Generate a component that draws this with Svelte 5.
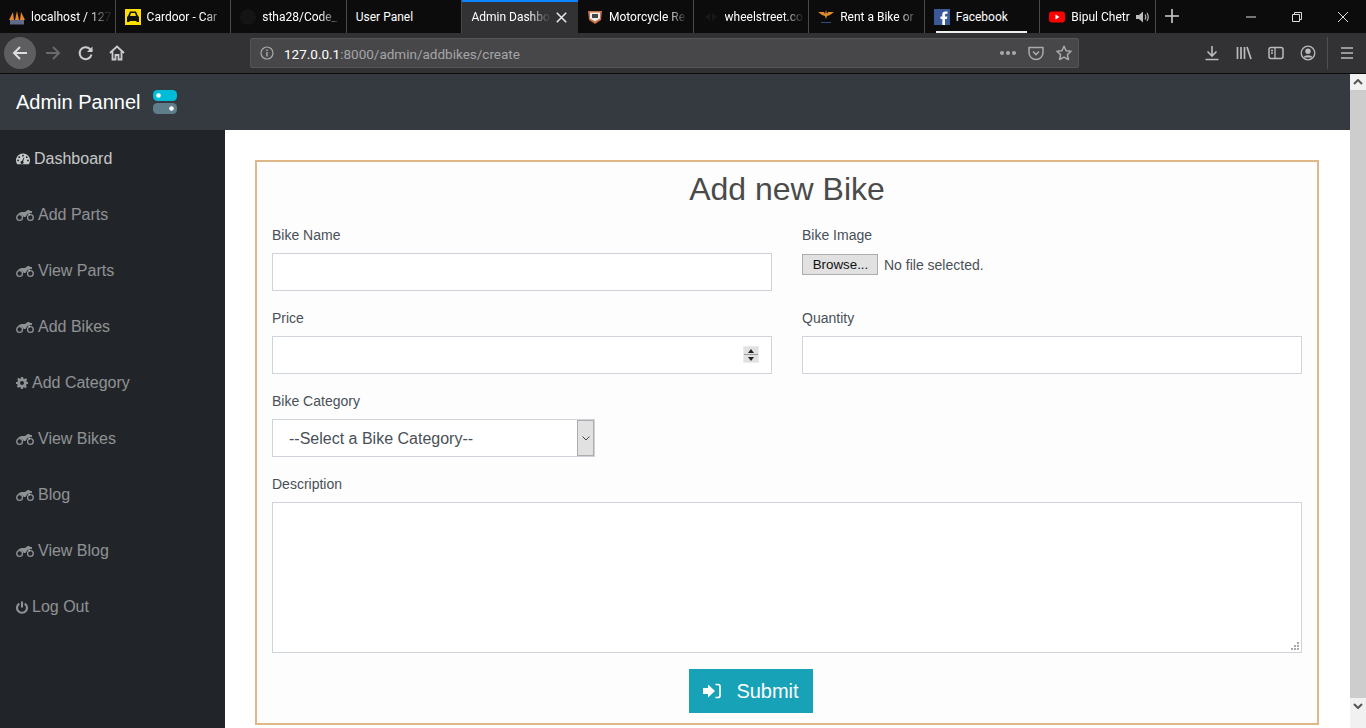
<script>
  const tabs = [
    { title: 'localhost / 127', icon: 'pma' },
    { title: 'Cardoor - Car', icon: 'car' },
    { title: 'stha28/Code_', icon: 'gh' },
    { title: 'User Panel', icon: '', plain: true },
    { title: 'Admin Dashbo', icon: '', active: true },
    { title: 'Motorcycle Re', icon: 'er' },
    { title: 'wheelstreet.co', icon: 'ws' },
    { title: 'Rent a Bike or', icon: 'om' },
    { title: 'Facebook', icon: 'fb', loaded: true, plain: true },
    { title: 'Bipul Chetr', icon: 'yt', audio: true }
  ];

  const menu = [
    { label: 'Dashboard', icon: 'gauge', first: true },
    { label: 'Add Parts', icon: 'bike' },
    { label: 'View Parts', icon: 'bike' },
    { label: 'Add Bikes', icon: 'bike' },
    { label: 'Add Category', icon: 'cog' },
    { label: 'View Bikes', icon: 'bike' },
    { label: 'Blog', icon: 'bike' },
    { label: 'View Blog', icon: 'bike' },
    { label: 'Log Out', icon: 'power' }
  ];
</script>

<div class="browser">
  <div class="tabbar">
    {#each tabs as tab}
      <div class="tab" class:active={tab.active}>
        {#if tab.icon === 'pma'}
          <svg class="fav" viewBox="0 0 16 16"><path d="M0 11 4 3l1 8zM6 11l2-9 2 9zM11 11l1-8 4 8z" fill="#e8862a"/><path d="M1 11h14v4.500H1z" fill="#5f6b88"/></svg>
        {:else if tab.icon === 'car'}
          <svg class="fav" viewBox="0 0 16 16"><path d="M0 0h16v16H0z" fill="#ffdd00"/><path d="M5 2.500h6l2 4.500 1 1v5h-2.500v-1h-7v1H2V8l1-1z" fill="#111"/><path d="M6 4h4l1 3H5z" fill="#ffdd00"/></svg>
        {:else if tab.icon === 'gh'}
          <svg class="fav" viewBox="0 0 16 16"><circle cx="8" cy="8" r="8" fill="#141414"/></svg>
        {:else if tab.icon === 'er'}
          <svg class="fav" viewBox="0 0 16 16"><path d="M1 2h14l-1 9-6 4-6-4z" fill="#c96f45"/><path d="M3 3.500h10v6l-5 3-5-3z" fill="#eee"/><path d="M5 5h6v4H5z" fill="#444"/></svg>
        {:else if tab.icon === 'ws'}
          <svg class="fav" viewBox="0 0 16 16"><path d="M2 8l5-4v8zM9 4l5 4-5 4z" fill="#181818"/></svg>
        {:else if tab.icon === 'om'}
          <svg class="fav" viewBox="0 0 16 16"><path d="M0 3h6l1 2 1-4 1 4 1-2h6l-4 3-3 1-1 3-1-3-3-1z" fill="#e08a2c"/><path d="M3 13h10v1H3z" fill="#30507a"/></svg>
        {:else if tab.icon === 'fb'}
          <svg class="fav" viewBox="0 0 16 16"><path d="M0 0h16v16H0z" fill="#3b5998"/><path d="M11 16v-6h2l.4-2.500H11V6c0-.8.3-1.200 1.200-1.200h1.300V2.500H11.500C9.300 2.500 8.300 3.700 8.300 5.700v1.800H6.500V10h1.800v6z" fill="#fff"/></svg>
        {:else if tab.icon === 'yt'}
          <svg class="fav" viewBox="0 0 16 16"><rect y="2.500" width="16" height="11" rx="3" fill="#f00"/><path d="M6.500 5.500l4 2.500-4 2.500z" fill="#fff"/></svg>
        {/if}
        <span class="tab-title" class:plain={tab.plain}>{tab.title}</span>
        {#if tab.active}
          <svg class="tab-close" viewBox="0 0 11 11"><path d="M.8.800l9.400 9.400M10.200.800.800 10.200" stroke="#e6e6e6" stroke-width="1.600"/></svg>
        {/if}
        {#if tab.audio}
          <svg class="tab-audio" viewBox="0 0 14 14"><path d="M0 5h3l4-3.500v11L3 9H0z" fill="#bbb"/><path d="M9 4.500q1.500 2.500 0 5M11 3q2.500 4 0 8" stroke="#bbb" stroke-width="1.200" fill="none"/></svg>
        {/if}
        {#if tab.loaded}<i class="tab-line"></i>{/if}
      </div>
    {/each}
    <svg class="newtab" viewBox="0 0 14 14"><path d="M7 0v14M0 7h14" stroke="#cfcfcf" stroke-width="1.600"/></svg>
    <div class="winctl">
      <svg viewBox="0 0 10 10"><path d="M0 5h10" stroke="#ddd"/></svg>
      <svg viewBox="0 0 10 10"><path d="M.5 2.500h7v7h-7zM2.500 2.500v-2h7v7h-2" stroke="#ddd" fill="none"/></svg>
      <svg viewBox="0 0 10 10"><path d="M0 0l10 10M10 0L0 10" stroke="#ddd"/></svg>
    </div>
  </div>

  <div class="toolbar">
    <div class="back">
      <svg viewBox="0 0 16 16"><path d="M15 8H2M8 2L2 8l6 6" stroke="#ddd" stroke-width="2" fill="none"/></svg>
    </div>
    <svg class="tool forward" viewBox="0 0 16 16"><path d="M1 8h13M8 2l6 6-6 6" stroke="#6a6a6b" stroke-width="2" fill="none"/></svg>
    <svg class="tool reload" viewBox="0 0 16 16"><path d="M13.500 9.500A6 6 0 1 1 12 4l2 2" stroke="#ccc" stroke-width="2" fill="none"/><path d="M14.500 1.500v5.500H9z" fill="#ccc"/></svg>
    <svg class="tool home" viewBox="0 0 16 16"><path d="M1 8l7-6.500L15 8M3.500 6.500V14.500H6.500V10h3v4.500h3V6.500" stroke="#ccc" stroke-width="1.800" fill="none"/></svg>
    <div class="urlbar">
      <svg class="info" viewBox="0 0 14 14"><circle cx="7" cy="7" r="6" stroke="#aaa" fill="none" stroke-width="1.200"/><path d="M7 6v4.500M7 3.500v1.500" stroke="#aaa" stroke-width="1.400"/></svg>
      <span class="url"><b>127.0.0.1</b>:8000/admin/addbikes/create</span>
      <span class="dots"><i></i><i></i><i></i></span>
      <svg class="urlicon" viewBox="0 0 16 16"><path d="M1 2.500h14v5a7 7 0 0 1-14 0z" stroke="#aaa" stroke-width="1.500" fill="none" stroke-linejoin="round"/><path d="M5 6.500l3 3 3-3" stroke="#aaa" stroke-width="1.600" fill="none"/></svg>
      <svg class="urlicon" viewBox="0 0 16 16"><path d="M8 1.200l2.100 4.600 5 .5-3.700 3.300 1 4.900L8 12.100l-4.400 2.400 1-4.900L.9 6.300l5-.5z" stroke="#aaa" stroke-width="1.500" fill="none" stroke-linejoin="round"/></svg>
    </div>
    <div class="tools-right">
      <svg viewBox="0 0 16 16"><path d="M8 1v10M3.500 6.500L8 11l4.500-4.500M1.500 14.500h13" stroke="#bbb" stroke-width="1.600" fill="none"/></svg>
      <svg viewBox="0 0 16 16"><path d="M1.500 2v12M5 2v12M8.500 2v12M11 2l4 12" stroke="#bbb" stroke-width="1.700" fill="none"/></svg>
      <svg viewBox="0 0 16 16"><rect x="1" y="2.500" width="14" height="11" rx="2" stroke="#bbb" stroke-width="1.500" fill="none"/><path d="M7 2.500v11M3 5.500h2M3 8h2" stroke="#bbb" stroke-width="1.300"/></svg>
      <svg viewBox="0 0 16 16"><circle cx="8" cy="8" r="6.800" stroke="#bbb" stroke-width="1.300" fill="none"/><circle cx="8" cy="6.300" r="2.700" fill="#bbb"/><path d="M3.500 12.500c.5-3 8.500-3 9 0z" fill="#bbb"/></svg>
      <i class="tool-sep"></i>
      <svg viewBox="0 0 16 16"><path d="M2 3h12M2 8h12M2 13h12" stroke="#bbb" stroke-width="1.700"/></svg>
    </div>
  </div>

  <div class="page">
    <div class="content">
      <header class="navbar">
        <span class="brand">Admin Pannel</span>
        <svg class="toggle" viewBox="0 0 24 24">
          <rect width="24" height="11" rx="4.500" fill="#00bcd9"/>
          <circle cx="5.500" cy="5.500" r="2.300" fill="#fff"/>
          <rect y="13" width="24" height="11" rx="4.500" fill="#607d8b"/>
          <circle cx="18.500" cy="18.500" r="2.300" fill="#fff"/>
        </svg>
      </header>
      <div class="body">
        <nav class="sidebar">
          {#each menu as item}
            <a class="item" class:first={item.first} href="#top">
              {#if item.icon === 'gauge'}
                <svg class="i-gauge" viewBox="0 0 15 12"><path fill-rule="evenodd" d="M7.500 0a7.500 7.500 0 0 1 6.300 11.500H1.200A7.500 7.500 0 0 1 7.500 0zM7.500 1.400a1 1 0 1 0 0 2 1 1 0 0 0 0-2zM3.500 3a1 1 0 1 0 0 2 1 1 0 0 0 0-2zM11.500 3a1 1 0 1 0 0 2 1 1 0 0 0 0-2zM2.200 6.500a1 1 0 1 0 0 2 1 1 0 0 0 0-2zM12.800 6.500a1 1 0 1 0 0 2 1 1 0 0 0 0-2zM8.300 4.500 6.400 8.100a1.600 1.600 0 1 0 1.200.5l1.300-3.900z"/></svg>
              {:else if item.icon === 'bike'}
                <svg class="i-bike" viewBox="0 0 18 11"><path fill-rule="evenodd" d="M3.600 4a3.500 3.500 0 1 1 0 7 3.500 3.500 0 0 1 0-7zm0 1.300a2.200 2.200 0 1 0 0 4.400 2.200 2.200 0 0 0 0-4.400zM14.400 4a3.500 3.500 0 1 1 0 7 3.500 3.500 0 0 1 0-7zm0 1.300a2.200 2.200 0 1 0 0 4.400 2.200 2.200 0 0 0 0-4.400z"/><path d="M1.500 3.700 5.500 2h3.200L11 .8l.4-.8h2l.5 1H16v2h-2.600l1 1.800-1.200.7L12 3.200 9.500 7H7.600C7.300 5 5 3.600 1.500 3.700z"/></svg>
              {:else if item.icon === 'cog'}
                <svg class="i-cog" viewBox="0 0 12 12"><path fill-rule="evenodd" d="M5 0h2l.3 1.600 1.100.5L9.800 1.200l1.400 1.400-.9 1.400.5 1.100L12 5v2l-1.600.3-.5 1.100.9 1.400-1.400 1.400-1.400-.9-1.100.5L7 12H5l-.3-1.600-1.100-.5-1.400.9-1.400-1.400.9-1.400-.5-1.100L0 7V5l1.600-.3.500-1.100-.9-1.400 1.400-1.400 1.400.9 1.100-.5zM6 4a2 2 0 1 0 0 4 2 2 0 0 0 0-4z"/></svg>
              {:else}
                <svg class="i-power" viewBox="0 0 12 13"><path d="M3.300 2.600a5 5 0 1 0 5.400 0M6 .5v6" fill="none" stroke="currentColor" stroke-width="2.100"/></svg>
              {/if}
              <span>{item.label}</span>
            </a>
          {/each}
        </nav>
        <main class="main">
          <form class="card">
            <h1>Add new Bike</h1>
            <div class="row">
              <div class="field">
                <label for="name">Bike Name</label>
                <input id="name" type="text" />
              </div>
              <div class="field">
                <label for="image">Bike Image</label>
                <div class="file" id="image">
                  <button type="button">Browse...</button>
                  <span>No file selected.</span>
                </div>
              </div>
            </div>
            <div class="row">
              <div class="field">
                <label for="price">Price</label>
                <div class="number">
                  <input id="price" type="text" />
                  <span class="spin"><i class="up"></i><i class="down"></i></span>
                </div>
              </div>
              <div class="field">
                <label for="qty">Quantity</label>
                <input id="qty" type="text" />
              </div>
            </div>
            <div class="field category">
              <label for="cat">Bike Category</label>
              <div class="select" id="cat">
                <span>--Select a Bike Category--</span>
                <span class="arrow"><svg viewBox="0 0 8 5"><path d="M.5.500 4 4 7.500.500" fill="none" stroke="#444"/></svg></span>
              </div>
            </div>
            <div class="field desc">
              <label for="description">Description</label>
              <div class="area" id="description">
                <svg class="grip" viewBox="0 0 9 9"><path d="M7 1h2v2H7zM4 4h2v2H4zM7 4h2v2H7zM1 7h2v2H1zM4 7h2v2H4zM7 7h2v2H7z" fill="#aaa"/></svg>
              </div>
            </div>
            <div class="actions">
              <button class="submit" type="button">
                <svg viewBox="0 0 18 16"><path d="M0 5h5V1.500L12 8l-7 6.500V11H0z" fill="#fff"/><path d="M12.500 1.500H15a2 2 0 0 1 2 2v9a2 2 0 0 1-2 2h-2.500" fill="none" stroke="#fff" stroke-width="1.700"/></svg>
                <span>Submit</span>
              </button>
            </div>
          </form>
        </main>
      </div>
    </div>
    <div class="scrollbar">
      <svg viewBox="0 0 10 6"><path d="M1 5l4-4 4 4" fill="none" stroke="#555" stroke-width="2"/></svg>
      <div class="thumb"></div>
      <svg viewBox="0 0 10 6"><path d="M1 1l4 4 4-4" fill="none" stroke="#555" stroke-width="2"/></svg>
    </div>
  </div>
</div>

<style>
  :global(body) {
    margin: 0;
    overflow: hidden;
  }

  .browser {
    width: 1366px;
    height: 728px;
    display: flex;
    flex-direction: column;
    overflow: hidden;
    font-family: "Liberation Sans", Arial, sans-serif;
  }

  /* tab strip */
  .tabbar {
    height: 33px;
    background: #0c0c0d;
    display: flex;
    align-items: stretch;
    flex: none;
  }

  .tab {
    position: relative;
    width: 115.6px;
    box-sizing: border-box;
    padding: 1px 4px 0 9px;
    display: flex;
    align-items: center;
    gap: 6px;
    color: #fff;
    font: 12px Roboto, "Noto Sans", sans-serif;
    border-right: 1px solid #4a4a4c;
  }

  .tab.active {
    background: #323234;
    border-right: 0;
    padding-right: 12px;
    box-shadow: inset 0 2px 0 #0a84ff;
  }

  .fav {
    width: 16px;
    height: 16px;
    flex: none;
  }

  .tab-title {
    flex: 1;
    white-space: nowrap;
    mask-image: linear-gradient(to right, #000 58px, rgba(0, 0, 0, 0.12) 76px);
  }

  .tab-title.plain {
    mask-image: none;
  }

  .tab-close {
    width: 11px;
    height: 11px;
    flex: none;
  }

  .tab-audio {
    width: 14px;
    height: 14px;
    flex: none;
    margin-right: 4px;
  }

  .tab-line {
    position: absolute;
    left: 11px;
    right: 12px;
    bottom: 0;
    height: 2px;
    background: #eee;
  }

  .newtab {
    width: 14px;
    height: 14px;
    margin: 9px 0 0 9px;
  }

  .winctl {
    margin-left: auto;
    display: flex;
    align-items: center;
    gap: 36px;
    padding-right: 18px;
  }

  .winctl svg {
    width: 10px;
    height: 10px;
  }

  /* toolbar */
  .toolbar {
    height: 41px;
    box-sizing: border-box;
    background: #323234;
    border-bottom: 1px solid #0c0c0d;
    display: flex;
    align-items: center;
    flex: none;
  }

  .back {
    width: 32px;
    height: 32px;
    margin-left: 4px;
    border-radius: 50%;
    background: #5e5e60;
    display: flex;
    align-items: center;
    justify-content: center;
  }

  .back svg {
    width: 16px;
    height: 16px;
  }

  .tool {
    width: 16px;
    height: 16px;
    flex: none;
  }

  .forward {
    margin-left: 9px;
  }

  .reload {
    margin-left: 17px;
  }

  .home {
    margin-left: 15px;
  }

  .urlbar {
    margin-left: 125px;
    width: 829px;
    height: 30px;
    box-sizing: border-box;
    background: #474749;
    border: 1px solid #555557;
    border-radius: 2px;
    display: flex;
    align-items: center;
    padding: 0 6px 0 9px;
  }

  .info {
    width: 14px;
    height: 14px;
  }

  .url {
    margin-left: 10px;
    padding-top: 2px;
    font: 13.5px Roboto, "Noto Sans", sans-serif;
    color: #a5a5a7;
    flex: 1;
  }

  .url b {
    font-weight: 400;
    color: #fff;
  }

  .dots {
    display: flex;
    gap: 2px;
  }

  .dots i {
    width: 4px;
    height: 4px;
    border-radius: 50%;
    background: #aaa;
  }

  .urlicon {
    width: 16px;
    height: 16px;
    margin-left: 12px;
  }

  .tools-right {
    margin-left: auto;
    display: flex;
    align-items: center;
    padding-right: 11px;
  }

  .tools-right svg {
    width: 16px;
    height: 16px;
    margin-left: 16px;
  }

  .tool-sep {
    width: 1px;
    height: 32px;
    background: #4f4f51;
    margin-left: 11px;
    margin-right: -5px;
  }

  /* page */
  .page {
    flex: 1;
    display: flex;
    min-height: 0;
  }

  .content {
    flex: 1;
    display: flex;
    flex-direction: column;
    min-width: 0;
  }

  .scrollbar {
    width: 16px;
    background: #f1f1f1;
    display: flex;
    flex-direction: column;
    align-items: center;
  }

  .scrollbar > svg {
    width: 10px;
    height: 6px;
    margin: 5px 0;
  }

  .thumb {
    width: 16px;
    height: 608px;
    background: #cdcdcd;
  }

  .navbar {
    height: 56px;
    flex: none;
    background: #343a40;
    display: flex;
    align-items: center;
    padding-left: 16px;
    gap: 12px;
  }

  .brand {
    color: #fff;
    font-size: 20px;
  }

  .toggle {
    width: 24px;
    height: 24px;
  }

  .body {
    flex: 1;
    display: flex;
    min-height: 0;
  }

  .sidebar {
    width: 225px;
    flex: none;
    background: #212529;
    display: flex;
    flex-direction: column;
  }

  .item {
    height: 56px;
    box-sizing: border-box;
    padding: 2px 0 0 16px;
    display: flex;
    align-items: center;
    gap: 4px;
    font-size: 16px;
    color: rgba(255, 255, 255, 0.5);
    text-decoration: none;
    flex: none;
  }

  .item.first {
    color: rgba(255, 255, 255, 0.75);
  }

  .item svg {
    fill: currentColor;
    flex: none;
  }

  .i-gauge {
    width: 14px;
    height: 12px;
  }

  .i-bike {
    width: 18px;
    height: 11px;
  }

  .i-cog {
    width: 12px;
    height: 12px;
  }

  .i-power {
    width: 12px;
    height: 13px;
  }

  .main {
    flex: 1;
    min-width: 0;
    background: #fff;
    padding: 30px 31px 0 30px;
  }

  .card {
    box-sizing: border-box;
    height: 565px;
    background: #fdfdfd;
    border: 2px solid #deb887;
    padding: 0 15px;
    color: #495057;
  }

  h1 {
    margin: 0 0 10px;
    height: 54px;
    line-height: 54px;
    text-align: center;
    font-size: 32px;
    font-weight: 400;
    color: #4a4a4a;
  }

  .row {
    display: grid;
    grid-template-columns: 500px 500px;
    gap: 30px;
    margin-bottom: 18px;
  }

  .field {
    display: flex;
    flex-direction: column;
  }

  label {
    height: 19px;
    line-height: 19px;
    font-size: 14px;
    margin-bottom: 8px;
  }

  input {
    box-sizing: border-box;
    width: 100%;
    height: 38px;
    border: 1px solid #ced4da;
    background: #fff;
    padding: 0 12px;
    outline: none;
  }

  .file {
    height: 38px;
    display: flex;
    align-items: flex-start;
    font-size: 14px;
    gap: 6px;
  }

  .file span {
    line-height: 24px;
  }

  .file button {
    width: 76px;
    height: 21px;
    margin-top: 1px;
    padding: 0 0 0 1px;
    box-sizing: border-box;
    background: #e1e1e1;
    border: 1px solid #adadad;
    font: 13.33px "Liberation Sans", Arial, sans-serif;
    color: #111;
  }

  .number {
    position: relative;
  }

  .spin {
    position: absolute;
    top: 10px;
    right: 13px;
    box-sizing: border-box;
    width: 16px;
    height: 17px;
    padding: 1px;
    background: #ececec;
    display: flex;
    flex-direction: column;
  }

  .spin i {
    flex: 1;
    background: #e1e1e1;
    position: relative;
  }

  .spin .up {
    border-bottom: 1px solid #9a9a9a;
  }

  .spin i::after {
    content: "";
    position: absolute;
    left: 3.500px;
    top: 2px;
    border-left: 3.500px solid transparent;
    border-right: 3.500px solid transparent;
  }

  .spin .up::after {
    border-bottom: 4px solid #222;
  }

  .spin .down::after {
    border-top: 4px solid #222;
  }

  .category {
    width: 323px;
    margin-bottom: 18px;
  }

  .select {
    position: relative;
    height: 38px;
    box-sizing: border-box;
    border: 1px solid #ced4da;
    background: #fff;
    padding: 1px 0 0 16px;
    display: flex;
    align-items: center;
    font-size: 16px;
  }

  .arrow {
    position: absolute;
    top: 0;
    right: 0;
    bottom: 0;
    width: 17px;
    box-sizing: border-box;
    background: #e1e1e1;
    border: 1px solid #adadad;
    display: flex;
    align-items: center;
    justify-content: center;
  }

  .arrow svg {
    width: 8px;
    height: 5px;
  }

  .desc {
    margin-bottom: 16px;
  }

  .area {
    position: relative;
    height: 151px;
    box-sizing: border-box;
    border: 1px solid #ced4da;
    background: #fff;
  }

  .grip {
    position: absolute;
    right: 2px;
    bottom: 2px;
    width: 9px;
    height: 9px;
  }

  .actions {
    display: flex;
    justify-content: center;
    padding-right: 72px;
  }

  .submit {
    width: 124px;
    height: 44px;
    border: 0;
    padding: 0;
    background: #17a2b8;
    color: #fff;
    font: 20px "Liberation Sans", Arial, sans-serif;
    display: flex;
    align-items: center;
    justify-content: center;
    gap: 15px;
  }

  .submit svg {
    width: 18px;
    height: 16px;
  }
</style>
